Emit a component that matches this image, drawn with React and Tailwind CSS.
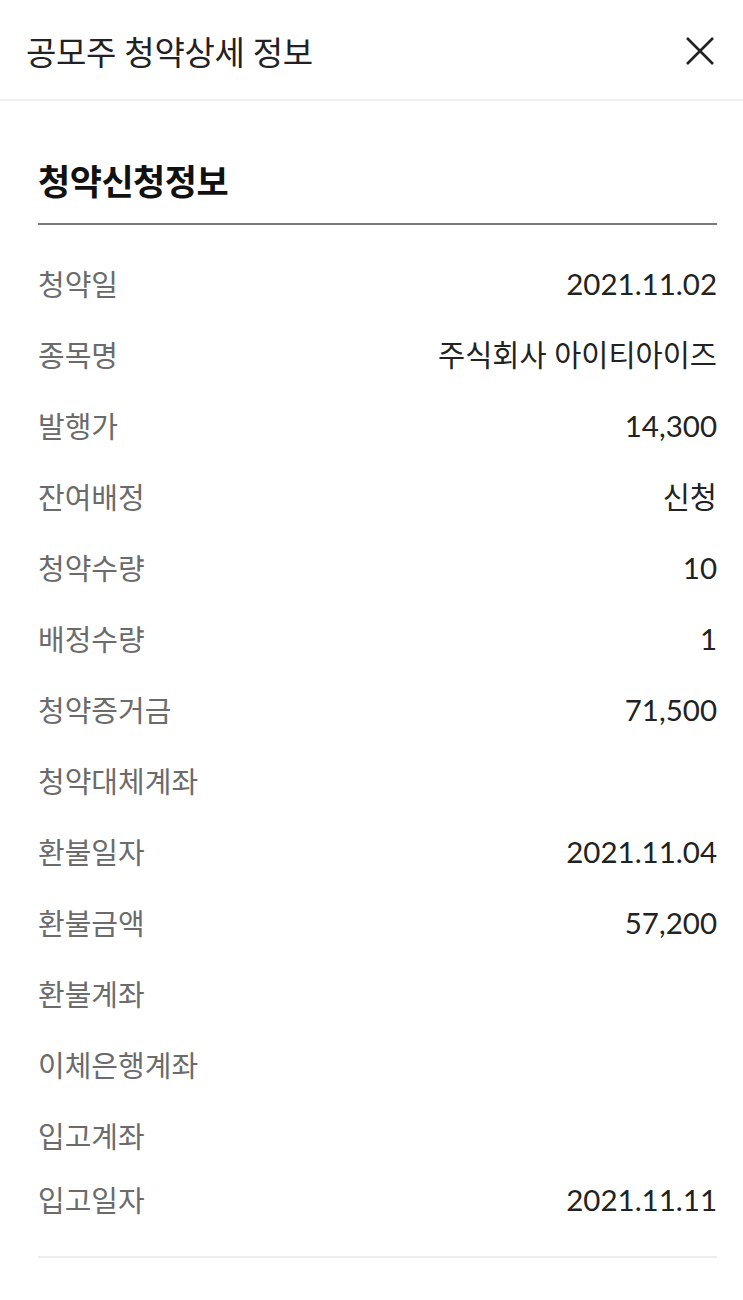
import React from "react";

const rows = [
  ["청약일", "2021.11.02"],
  ["종목명", "주식회사 아이티아이즈"],
  ["발행가", "14,300"],
  ["잔여배정", "신청"],
  ["청약수량", "10"],
  ["배정수량", "1"],
  ["청약증거금", "71,500"],
  ["청약대체계좌", ""],
  ["환불일자", "2021.11.04"],
  ["환불금액", "57,200"],
  ["환불계좌", ""],
  ["이체은행계좌", ""],
  ["입고계좌", ""],
];

export default function App() {
  return (
    <div
      className="w-[743px] min-h-[1300px] bg-white"
      style={{ fontFamily: '"Lato", "Noto Sans CJK KR", sans-serif' }}
    >
      <header className="h-[101px] flex items-center justify-between pl-[26px] pr-[28px] border-b-2 border-[#eeeeee]">
        <h1 className="pt-[6px] text-[33px] text-[#222222] font-normal tracking-[-0.3px]">
          공모주 청약상세 정보
        </h1>
        <svg width="30" height="30" viewBox="0 0 30 30" className="mt-[2px]">
          <path d="M2 2 L28 28 M28 2 L2 28" stroke="#222222" strokeWidth="2.6" strokeLinecap="butt" />
        </svg>
      </header>
      <section className="pl-[38px] pr-[26px]">
        <h2 className="pt-[59px] pb-[21px] text-[35px] leading-[42px] font-bold text-[#111111] tracking-[-0.5px]">
          청약신청정보
        </h2>
        <div className="h-[2px] bg-[#7a7a7a]" />
        <div className="pt-[24px]">
          {rows.map(([label, value]) => (
            <div key={label} className="h-[71px] flex items-center justify-between">
              <span className="text-[29px] text-[#6b6b6b]">{label}</span>
              <span className="text-[29.5px] text-[#222222]">{value}</span>
            </div>
          ))}
          <div className="h-[57px] flex items-center justify-between">
            <span className="text-[29px] text-[#6b6b6b]">입고일자</span>
            <span className="text-[29.5px] text-[#222222]">2021.11.11</span>
          </div>
        </div>
        <div className="mt-[27px] h-[2px] bg-[#eeeeee]" />
      </section>
    </div>
  );
}
